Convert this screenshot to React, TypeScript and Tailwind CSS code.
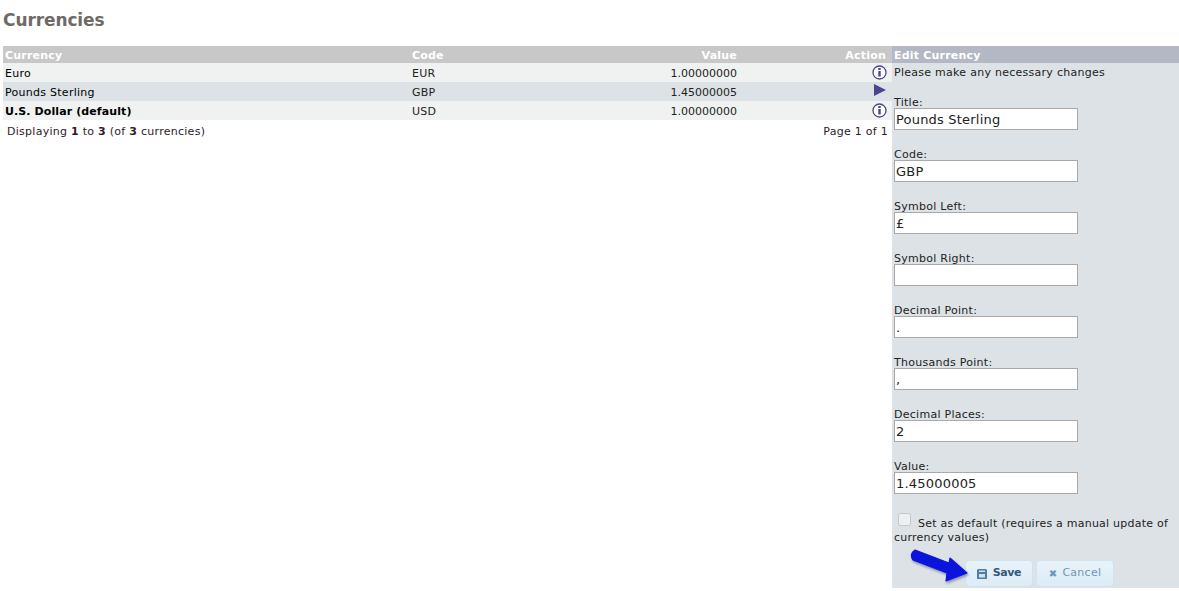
const font = { fontFamily: '"DejaVu Sans", Verdana, sans-serif' };

const rows = [
  { name: 'Euro', code: 'EUR', value: '1.00000000', active: false, bold: false },
  { name: 'Pounds Sterling', code: 'GBP', value: '1.45000005', active: true, bold: false },
  { name: 'U.S. Dollar (default)', code: 'USD', value: '1.00000000', active: false, bold: true },
];

const fields = [
  { label: 'Title:', value: 'Pounds Sterling' },
  { label: 'Code:', value: 'GBP' },
  { label: 'Symbol Left:', value: '£' },
  { label: 'Symbol Right:', value: '' },
  { label: 'Decimal Point:', value: '.' },
  { label: 'Thousands Point:', value: ',' },
  { label: 'Decimal Places:', value: '2' },
  { label: 'Value:', value: '1.45000005' },
];

const InfoIcon = () => (
  <svg width="15" height="15" viewBox="0 0 15 15" className="block">
    <circle cx="7.5" cy="7.5" r="6.5" fill="#fff" stroke="#4b4590" strokeWidth="1.3" />
    <rect x="6.3" y="6" width="2.4" height="5.5" fill="#4b4590" />
    <rect x="6.3" y="3" width="2.4" height="2" fill="#4b4590" />
  </svg>
);

const ArrowIcon = () => (
  <svg width="13" height="12" viewBox="0 0 13 12" className="block">
    <path d="M0 0 L12 6 L0 12 Z" fill="#4b4590" />
  </svg>
);

const App = () => {
  return (
    <div className="w-[1179px] h-[591px] overflow-hidden bg-white text-[11px] tracking-[0.27px] text-[#222]" style={font}>
      <h1 className="h-[46px] pl-[3px] pt-[10px] text-[17px] leading-[20px] tracking-[-0.1px] font-bold text-[#6e6a64]">Currencies</h1>
      <div className="flex items-start pl-[3px]">
        <div className="w-[889px] shrink-0">
          <div className="flex h-[17px] items-start bg-[#c8c8c8] pl-[2px] pr-[6px] pt-[3px] leading-[13px] font-bold tracking-[0.2px] text-white">
            <div className="w-[407px]">Currency</div>
            <div className="w-[60px]">Code</div>
            <div className="w-[265px] text-right">Value</div>
            <div className="flex-1 text-right">Action</div>
          </div>
          {rows.map(row => (
            <div
              key={row.code}
              className={`flex h-[19px] items-start pl-[2px] pr-[5px] ${row.active ? 'bg-[#dde2e6]' : 'bg-[#f0f2f1]'}`}
            >
              <div className={`w-[407px] pt-[3px] leading-[15px] text-black ${row.bold ? 'font-bold tracking-[0.1px]' : ''}`}>{row.name}</div>
              <div className="w-[60px] pt-[3px] leading-[15px]">{row.code}</div>
              <div className="w-[265px] pt-[3px] text-right leading-[15px] tracking-normal">{row.value}</div>
              <div className="flex flex-1 justify-end pt-[2px]">{row.active ? <ArrowIcon /> : <InfoIcon />}</div>
            </div>
          ))}
          <div className="flex justify-between pl-[4px] pt-[4px] text-[#2e1a2a]">
            <span>
              Displaying <b>1</b> to <b>3</b> (of <b>3</b> currencies)
            </span>
            <span className="pr-[4px]">Page 1 of 1</span>
          </div>
        </div>

        <div className="h-[542px] w-[287px] shrink-0 bg-[#dde2e6]">
          <div className="flex h-[17px] items-start bg-[#b3b8c4] pl-[2px] pt-[3px] leading-[13px] font-bold tracking-[0.2px] text-white">Edit Currency</div>
          <div className="flex flex-col pl-[2px] pt-[3px]">
            <div className="h-[29px] leading-[14px]">Please make any necessary changes</div>
            {fields.map(f => (
              <div key={f.label} className="mb-[10px] h-[42px]">
                <div className="h-[13px] pt-px leading-[13px]">{f.label}</div>
                <input
                  readOnly
                  value={f.value}
                  className="block h-[22px] w-[184px] border border-[#a9a9a9] bg-white px-[1px] text-[13px] tracking-[0.2px] text-[#222] outline-none"
                  style={font}
                />
              </div>
            ))}
            <div className="mt-[2px] w-[280px] leading-[14px] tracking-[0.23px]">
              <input type="checkbox" disabled className="mr-[7px] ml-[4px] inline-block h-[13px] w-[13px] align-[1px]" />
              Set as default (requires a manual update of currency values)
            </div>
            <div className="relative mt-[15px] flex gap-[3px] pl-[71px]">
              <svg width="60" height="36" viewBox="0 0 60 36" className="absolute left-[16px] top-[-12px] z-10 drop-shadow-[1px_2px_1px_rgba(0,0,60,0.35)]">
                <path d="M5 2 L39 15 L40 10 L57 25 L36 33 L37 25 L3 12 Q-1 6 5 2 Z" fill="#0a14dc" stroke="#0a14dc" strokeWidth="1.2" strokeLinejoin="round" />
              </svg>
              <button className="flex h-[27px] w-[68px] items-center justify-center gap-[6px] rounded-[4px] border border-[#cfe2f0] bg-gradient-to-b from-[#e9f3fa] to-[#dcebf6] font-bold tracking-[-0.4px] text-[#33587a]">
                <svg width="10" height="10" viewBox="0 0 10 10">
                  <path d="M1 0 H9 L10 1 V10 H0 V1 Z" fill="#4f7ea3" />
                  <rect x="2" y="1.5" width="6" height="1.5" fill="#cfe2f0" />
                  <rect x="2" y="5" width="6" height="3.5" fill="#cfe2f0" />
                </svg>
                Save
              </button>
              <button className="flex h-[27px] w-[78px] items-center justify-center gap-[5px] rounded-[4px] border border-[#cfe2f0] bg-gradient-to-b from-[#e9f3fa] to-[#dcebf6] text-[#6f97b5]">
                <span className="text-[10px] font-bold">✖</span>
                Cancel
              </button>
            </div>
          </div>
        </div>
      </div>
    </div>
  );
};

export default App;
